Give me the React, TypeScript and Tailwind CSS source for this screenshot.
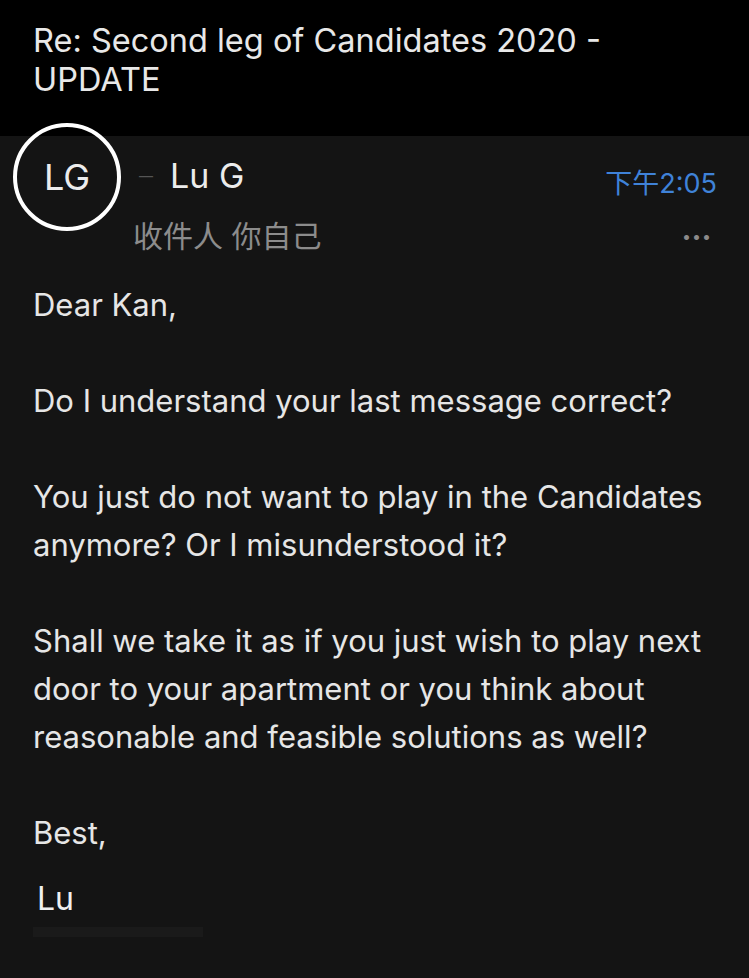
const font = { fontFamily: 'Inter, "Noto Sans CJK SC", sans-serif' };

const paragraphs: string[][] = [
  ['Dear Kan,'],
  ['Do I understand your last message correct?'],
  ['You just do not want to play in the Candidates', 'anymore? Or I misunderstood it?'],
  ['Shall we take it as if you just wish to play next', 'door to your apartment or you think about', 'reasonable and feasible solutions as well?'],
  ['Best,'],
];

export default function App() {
  return (
    <div className="w-[749px] h-[978px] overflow-hidden bg-[#141414] text-[#e6e6e6]" style={font}>
      {/* subject */}
      <div className="h-[136px] bg-black px-[33px] pt-[21px]">
        <h1 className="text-[32.5px] leading-[39px] text-[#e8e8e8]">
          Re: Second leg of Candidates 2020 -
          <br />
          UPDATE
        </h1>
      </div>

      {/* sender */}
      <div className="flex h-[145px]">
        <div className="ml-[13px] -mt-[13px] flex h-[108px] w-[108px] shrink-0 items-center justify-center rounded-full border-[4px] border-white">
          <span className="text-[36px] text-[#ececec]">LG</span>
        </div>
        <div className="ml-[12px] flex-1 pr-[32px] pt-[20px]">
          <div className="flex items-start justify-between">
            <div className="flex items-center text-[34px] leading-[40px]">
              <span className="ml-[6px] mr-[17px] text-[14px] text-[#555]">— </span>
              <span className="text-[#ececec]">Lu G</span>
            </div>
            <span className="mt-[13px] text-[27px] leading-[30px] text-[#3f82d8]">下午2:05</span>
          </div>
          <div className="mt-[19px] flex items-center justify-between">
            <span className="text-[30px] leading-[36px] text-[#8c8c8c]">收件人 你自己</span>
            <span className="mr-[5px] text-[16px] leading-[20px] tracking-[1px] text-[#8a8a8a]">•••</span>
          </div>
        </div>
      </div>

      {/* body */}
      <div className="px-[33px] text-[31px] leading-[48px]">
        {paragraphs.map((lines, i) => (
          <p key={i} className="mb-[48px]">
            {lines.map((l, j) => (
              <span key={j} className="block">
                {l}
              </span>
            ))}
          </p>
        ))}
        <p className="-mt-[30px] pl-[4px] text-[32px] text-[#f0f0f0]">Lu</p>
        <div className="mt-[4px] h-[10px] w-[170px] bg-[#1a1a1a]" />
      </div>
    </div>
  );
}
